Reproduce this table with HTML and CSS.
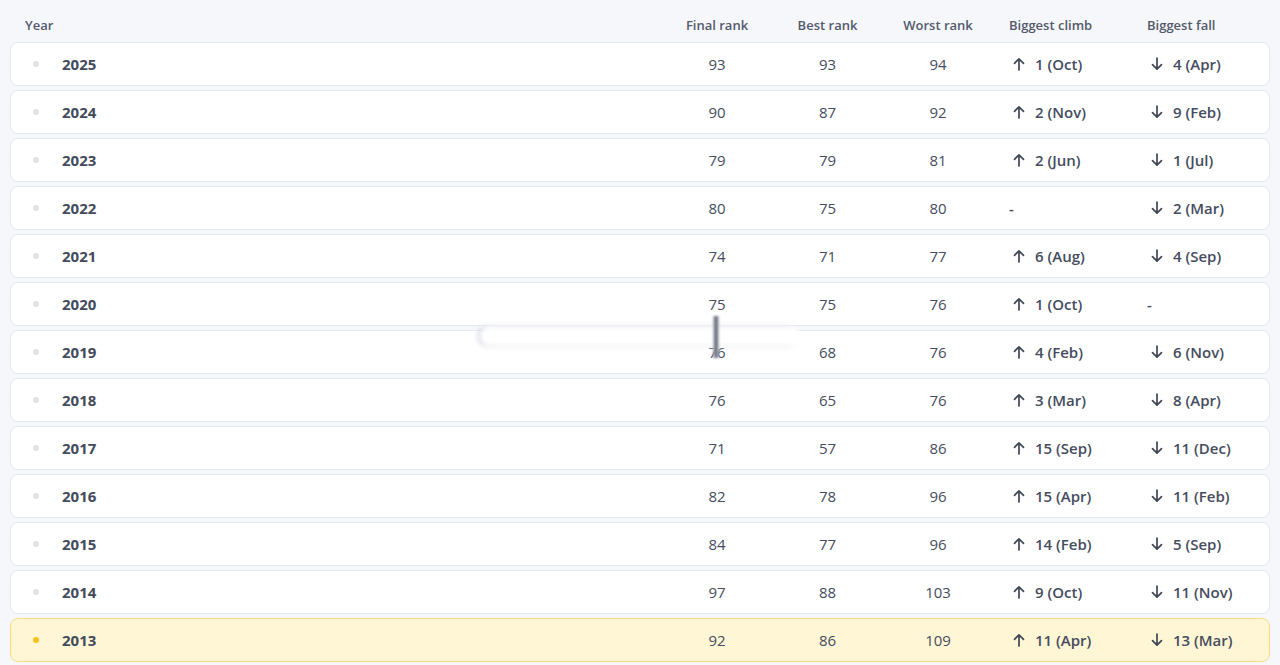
FILE: index.html
```html
<!DOCTYPE html>
<html>
<head>
<meta charset="utf-8">
<link rel="stylesheet" href="styles.css">
</head>
<body>
<div class="table">
  <div class="head grid">
    <div class="c-year">Year</div>
    <div class="c-num">Final rank</div>
    <div class="c-num">Best rank</div>
    <div class="c-num">Worst rank</div>
    <div class="c-move">Biggest climb</div>
    <div class="c-move">Biggest fall</div>
  </div>
  <div class="row grid"><div class="c-year"><span class="dot"></span>2025</div><div class="c-num">93</div><div class="c-num">93</div><div class="c-num">94</div><div class="c-move"><svg class="ar" viewBox="0 0 12 14"><path d="M6 13V1.8M1.5 6.3L6 1.8l4.5 4.5"/></svg>1 (Oct)</div><div class="c-move"><svg class="ar" viewBox="0 0 12 14"><path d="M6 1v11.2M1.5 7.7L6 12.2l4.5-4.5"/></svg>4 (Apr)</div></div>
  <div class="row grid"><div class="c-year"><span class="dot"></span>2024</div><div class="c-num">90</div><div class="c-num">87</div><div class="c-num">92</div><div class="c-move"><svg class="ar" viewBox="0 0 12 14"><path d="M6 13V1.8M1.5 6.3L6 1.8l4.5 4.5"/></svg>2 (Nov)</div><div class="c-move"><svg class="ar" viewBox="0 0 12 14"><path d="M6 1v11.2M1.5 7.7L6 12.2l4.5-4.5"/></svg>9 (Feb)</div></div>
  <div class="row grid"><div class="c-year"><span class="dot"></span>2023</div><div class="c-num">79</div><div class="c-num">79</div><div class="c-num">81</div><div class="c-move"><svg class="ar" viewBox="0 0 12 14"><path d="M6 13V1.8M1.5 6.3L6 1.8l4.5 4.5"/></svg>2 (Jun)</div><div class="c-move"><svg class="ar" viewBox="0 0 12 14"><path d="M6 1v11.2M1.5 7.7L6 12.2l4.5-4.5"/></svg>1 (Jul)</div></div>
  <div class="row grid"><div class="c-year"><span class="dot"></span>2022</div><div class="c-num">80</div><div class="c-num">75</div><div class="c-num">80</div><div class="c-move">-</div><div class="c-move"><svg class="ar" viewBox="0 0 12 14"><path d="M6 1v11.2M1.5 7.7L6 12.2l4.5-4.5"/></svg>2 (Mar)</div></div>
  <div class="row grid"><div class="c-year"><span class="dot"></span>2021</div><div class="c-num">74</div><div class="c-num">71</div><div class="c-num">77</div><div class="c-move"><svg class="ar" viewBox="0 0 12 14"><path d="M6 13V1.8M1.5 6.3L6 1.8l4.5 4.5"/></svg>6 (Aug)</div><div class="c-move"><svg class="ar" viewBox="0 0 12 14"><path d="M6 1v11.2M1.5 7.7L6 12.2l4.5-4.5"/></svg>4 (Sep)</div></div>
  <div class="row grid"><div class="c-year"><span class="dot"></span>2020</div><div class="c-num">75</div><div class="c-num">75</div><div class="c-num">76</div><div class="c-move"><svg class="ar" viewBox="0 0 12 14"><path d="M6 13V1.8M1.5 6.3L6 1.8l4.5 4.5"/></svg>1 (Oct)</div><div class="c-move">-</div></div>
  <div class="row grid"><div class="c-year"><span class="dot"></span>2019</div><div class="c-num">76</div><div class="c-num">68</div><div class="c-num">76</div><div class="c-move"><svg class="ar" viewBox="0 0 12 14"><path d="M6 13V1.8M1.5 6.3L6 1.8l4.5 4.5"/></svg>4 (Feb)</div><div class="c-move"><svg class="ar" viewBox="0 0 12 14"><path d="M6 1v11.2M1.5 7.7L6 12.2l4.5-4.5"/></svg>6 (Nov)</div></div>
  <div class="row grid"><div class="c-year"><span class="dot"></span>2018</div><div class="c-num">76</div><div class="c-num">65</div><div class="c-num">76</div><div class="c-move"><svg class="ar" viewBox="0 0 12 14"><path d="M6 13V1.8M1.5 6.3L6 1.8l4.5 4.5"/></svg>3 (Mar)</div><div class="c-move"><svg class="ar" viewBox="0 0 12 14"><path d="M6 1v11.2M1.5 7.7L6 12.2l4.5-4.5"/></svg>8 (Apr)</div></div>
  <div class="row grid"><div class="c-year"><span class="dot"></span>2017</div><div class="c-num">71</div><div class="c-num">57</div><div class="c-num">86</div><div class="c-move"><svg class="ar" viewBox="0 0 12 14"><path d="M6 13V1.8M1.5 6.3L6 1.8l4.5 4.5"/></svg>15 (Sep)</div><div class="c-move"><svg class="ar" viewBox="0 0 12 14"><path d="M6 1v11.2M1.5 7.7L6 12.2l4.5-4.5"/></svg>11 (Dec)</div></div>
  <div class="row grid"><div class="c-year"><span class="dot"></span>2016</div><div class="c-num">82</div><div class="c-num">78</div><div class="c-num">96</div><div class="c-move"><svg class="ar" viewBox="0 0 12 14"><path d="M6 13V1.8M1.5 6.3L6 1.8l4.5 4.5"/></svg>15 (Apr)</div><div class="c-move"><svg class="ar" viewBox="0 0 12 14"><path d="M6 1v11.2M1.5 7.7L6 12.2l4.5-4.5"/></svg>11 (Feb)</div></div>
  <div class="row grid"><div class="c-year"><span class="dot"></span>2015</div><div class="c-num">84</div><div class="c-num">77</div><div class="c-num">96</div><div class="c-move"><svg class="ar" viewBox="0 0 12 14"><path d="M6 13V1.8M1.5 6.3L6 1.8l4.5 4.5"/></svg>14 (Feb)</div><div class="c-move"><svg class="ar" viewBox="0 0 12 14"><path d="M6 1v11.2M1.5 7.7L6 12.2l4.5-4.5"/></svg>5 (Sep)</div></div>
  <div class="row grid"><div class="c-year"><span class="dot"></span>2014</div><div class="c-num">97</div><div class="c-num">88</div><div class="c-num">103</div><div class="c-move"><svg class="ar" viewBox="0 0 12 14"><path d="M6 13V1.8M1.5 6.3L6 1.8l4.5 4.5"/></svg>9 (Oct)</div><div class="c-move"><svg class="ar" viewBox="0 0 12 14"><path d="M6 1v11.2M1.5 7.7L6 12.2l4.5-4.5"/></svg>11 (Nov)</div></div>
  <div class="row grid active"><div class="c-year"><span class="dot"></span>2013</div><div class="c-num">92</div><div class="c-num">86</div><div class="c-num">109</div><div class="c-move"><svg class="ar" viewBox="0 0 12 14"><path d="M6 13V1.8M1.5 6.3L6 1.8l4.5 4.5"/></svg>11 (Apr)</div><div class="c-move"><svg class="ar" viewBox="0 0 12 14"><path d="M6 1v11.2M1.5 7.7L6 12.2l4.5-4.5"/></svg>13 (Mar)</div></div>
  <div class="glitch"><div class="glitch-band"></div><div class="glitch-bar"></div></div>
</div>
</body>
</html>
```

FILE: styles.css
```css
html, body {
  margin: 0;
  padding: 0;
  background: #f6f7fa;
  font-family: "Open Sans", "Noto Sans", sans-serif;
  color: #3f4657;
}

.table {
  padding: 0 10px;
  position: relative;
}

.grid {
  display: grid;
  grid-template-columns: 1fr 110px 111px 110px 154px 111px;
  align-items: center;
}

.head {
  height: 42px;
  padding: 8px 12px 0 15px;
  font-size: 13px;
  font-weight: 600;
  color: #535a6d;
  box-sizing: border-box;
}

.row {
  height: 44px;
  margin-bottom: 4px;
  background: #fff;
  border: 1px solid #e7e9f0;
  border-radius: 8px;
  box-sizing: border-box;
  padding: 0 11px 0 22px;
  font-size: 15px;
}

.row.active {
  background: #fff6d6;
  border-color: #f5dd86;
}

.c-year {
  display: flex;
  align-items: center;
}

.row .c-year {
  font-weight: 700;
  color: #434a5a;
}

.dot {
  width: 6px;
  height: 6px;
  border-radius: 50%;
  background: #e1e3e8;
  margin-right: 23px;
}

.active .dot {
  background: #f7c21a;
}

.c-num {
  text-align: center;
}

.row .c-num {
  font-weight: 500;
  color: #464d5e;
}

.c-move {
  display: flex;
  align-items: center;
}

.head .c-move:nth-child(5),
.row .c-move:nth-child(5) {
  padding-left: 16px;
}

.row .c-move {
  font-weight: 600;
  color: #454c5d;
}

.ar {
  width: 12px;
  height: 14px;
  margin: 0 10px 0 4px;
  fill: none;
  stroke: #3f4657;
  stroke-width: 1.7;
  stroke-linecap: round;
  stroke-linejoin: round;
}

.glitch {
  position: absolute;
  left: 470px;
  top: 312px;
  width: 340px;
  height: 48px;
  pointer-events: none;
}

.glitch-band {
  position: absolute;
  left: 10px;
  top: 14px;
  width: 320px;
  height: 20px;
  border-radius: 10px;
  background: rgba(255, 255, 255, 0.9);
  box-shadow: -2px 0 0 1px rgba(200, 204, 214, 0.7);
  filter: blur(2px);
}

.glitch-bar {
  position: absolute;
  left: 243px;
  top: 4px;
  width: 6px;
  height: 42px;
  background: linear-gradient(90deg, #c7cbd4, #5a6070, #c7cbd4);
  filter: blur(1px);
}
```
